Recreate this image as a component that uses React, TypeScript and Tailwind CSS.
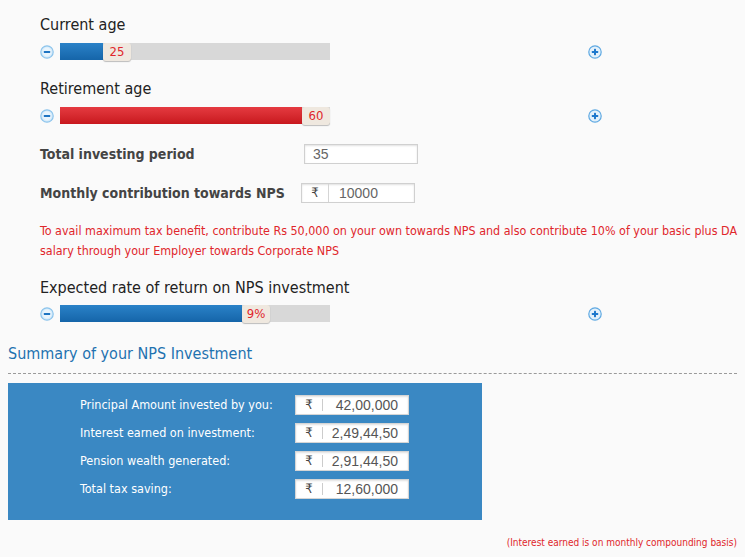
import React from "react";

const FONT = { fontFamily: '"DejaVu Sans Condensed", "DejaVu Sans", Tahoma, sans-serif' };

function Minus() {
  return (
    <svg width="14" height="14" viewBox="0 0 14 14" className="shrink-0">
      <circle cx="7" cy="7" r="6.2" fill="#d6ebfa" stroke="#8cc4ec" strokeWidth="1.2" />
      <circle cx="7" cy="7" r="4.4" fill="#eaf5fd" />
      <rect x="3.8" y="6" width="6.4" height="2" rx="0.6" fill="#1e74c2" />
    </svg>
  );
}

function Plus() {
  return (
    <svg width="14" height="14" viewBox="0 0 14 14" className="shrink-0">
      <circle cx="7" cy="7" r="6.2" fill="#e4f1fb" stroke="#5fa9e2" strokeWidth="1.2" />
      <rect x="3.8" y="6" width="6.4" height="2" rx="0.6" fill="#1e78cc" />
      <rect x="6" y="3.8" width="2" height="6.4" rx="0.6" fill="#1e78cc" />
    </svg>
  );
}

function Slider({ fill, value, color }: { fill: number; value: string; color: "blue" | "red" }) {
  const fillCls =
    color === "blue"
      ? "bg-gradient-to-b from-[#2a82c8] to-[#1565a9]"
      : "bg-gradient-to-b from-[#e53a40] to-[#c8161d]";
  return (
    <div className="flex items-center h-[17px]">
      <Minus />
      <div className="relative ml-[6px] w-[270px] h-[17px] bg-[#d8d8d8]">
        <div className={`absolute left-0 top-0 h-full ${fillCls}`} style={{ width: fill }} />
        <div
          className="absolute top-0 h-[18px] w-[28px] rounded-[3px] bg-[#efe8df] shadow-[0_1px_1px_rgba(0,0,0,0.25)] flex items-center justify-center text-[13px] text-[#e0262b]"
          style={{ left: fill }}
        >
          {value}
        </div>
      </div>
      <div className="ml-[258px]">
        <Plus />
      </div>
    </div>
  );
}

function SumRow({ label, value }: { label: string; value: string }) {
  return (
    <div className="flex items-center h-[20px]">
      <div className="w-[287px] pl-[72px] text-white text-[12.5px] whitespace-nowrap">{label}</div>
      <div className="flex items-center w-[114px] h-[20px] bg-white border border-[#d5d5d5] shadow-[inset_0_1px_2px_rgba(0,0,0,0.12)]">
        <div className="w-[26px] flex items-center justify-center text-[13px] text-[#444]">₹</div>
        <div className="w-px h-[12px] bg-[#ccc]" />
        <div
          className="flex-1 text-right pr-[10px] text-[14px] text-[#555]"
          style={{ fontFamily: '"Liberation Sans", Arial, sans-serif' }}
        >
          {value}
        </div>
      </div>
    </div>
  );
}

export default function App() {
  return (
    <div className="w-[745px] h-[557px] bg-[#fafafa] overflow-hidden px-[8px]" style={FONT}>
      <div className="ml-[32px]">
        <div className="pt-[15px] h-[35px] leading-[20px] text-[16px] text-[#222]">Current age</div>
        <div className="mt-[8px]">
          <Slider fill={43} value="25" color="blue" />
        </div>
        <div className="mt-[19px] h-[20px] leading-[20px] text-[16px] text-[#222]">Retirement age</div>
        <div className="mt-[8px]">
          <Slider fill={242} value="60" color="red" />
        </div>
        <div className="mt-[20px] flex items-center h-[20px]">
          <div className="w-[264px] text-[14px] font-bold text-[#444]">Total investing period</div>
          <div
            className="w-[114px] h-[20px] bg-white border border-[#d0d0d0] shadow-[inset_0_1px_2px_rgba(0,0,0,0.12)] pl-[8px] flex items-center text-[14px] text-[#666]"
            style={{ fontFamily: '"Liberation Sans", Arial, sans-serif' }}
          >
            35
          </div>
        </div>
        <div className="mt-[19px] flex items-center h-[20px]">
          <div className="w-[261px] text-[14px] font-bold text-[#444] whitespace-nowrap">Monthly contribution towards NPS</div>
          <div className="flex items-center w-[114px] h-[20px] bg-white border border-[#d0d0d0] shadow-[inset_0_1px_2px_rgba(0,0,0,0.12)]">
            <div className="w-[26px] flex items-center justify-center text-[13px] text-[#444]">₹</div>
            <div className="w-px h-full bg-[#d5d5d5]" />
            <div className="pl-[10px] text-[14px] text-[#666]" style={{ fontFamily: '"Liberation Sans", Arial, sans-serif' }}>
              10000
            </div>
          </div>
        </div>
        <div className="mt-[18px] text-[12.4px] leading-[20px] text-[#e0262b] whitespace-nowrap">
          To avail maximum tax benefit, contribute Rs 50,000 on your own towards NPS and also contribute 10% of your basic plus DA
          <br />
          salary through your Employer towards Corporate NPS
        </div>
        <div className="mt-[17px] h-[20px] leading-[20px] text-[16px] text-[#222]">Expected rate of return on NPS investment</div>
        <div className="mt-[7px]">
          <Slider fill={182} value="9%" color="blue" />
        </div>
      </div>
      <div className="mt-[22px] h-[20px] leading-[20px] text-[16px] text-[#1e72b0]">Summary of your NPS Investment</div>
      <div className="mt-[9px] border-t border-dashed border-[#9a9a9a]" />
      <div className="mt-[9px] w-[474px] h-[137px] bg-[#3a88c3] pt-[12px] flex flex-col gap-[8px]">
        <SumRow label="Principal Amount invested by you:" value="42,00,000" />
        <SumRow label="Interest earned on investment:" value="2,49,44,50" />
        <SumRow label="Pension wealth generated:" value="2,91,44,50" />
        <SumRow label="Total tax saving:" value="12,60,000" />
      </div>
      <div className="mt-[16px] flex justify-end">
        <div className="text-[10px] leading-[14px] text-[#e0262b] whitespace-nowrap">(Interest earned is on monthly compounding basis)</div>
      </div>
    </div>
  );
}
